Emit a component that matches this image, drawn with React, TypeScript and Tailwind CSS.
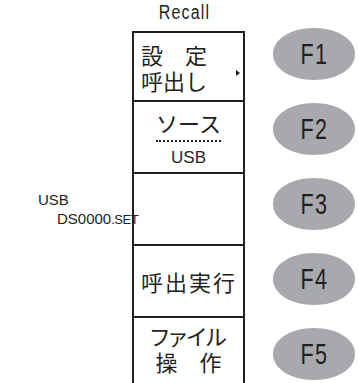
const jp = { fontFamily: '"Noto Sans CJK JP", "Noto Sans", sans-serif' };
const lat = { fontFamily: '"Liberation Sans", Arial, sans-serif' };

const keys = ["F1", "F2", "F3", "F4", "F5"];

function FKey({ label }: { label: string }) {
  return (
    <div className="relative w-[85px] h-[54px] flex items-center justify-center">
      <svg className="absolute inset-0" width="85" height="54" viewBox="0 0 85 54">
        <path
          d="M1 27 C1 12 19 1 42 1 C65 1 83 12 83 27 C83 42 65 53 42 53 C19 53 1 42 1 27 Z"
          fill="#a7a9ac"
        />
      </svg>
      <span
        className="relative text-[30px] leading-none text-[#231f20] scale-x-[0.72] tracking-[2px]"
        style={lat}
      >
        {label}
      </span>
    </div>
  );
}

export default function App() {
  return (
    <div className="w-[359px] h-[383px] bg-white overflow-hidden flex text-[#231f20]">
      {/* file info on the left */}
      <div className="w-[132px] pt-[190px] pl-[38px] text-[15px] leading-[19px]" style={lat}>
        <div>USB</div>
        <div className="pl-[19px] whitespace-nowrap">
          DS0000<span className="text-[13px] tracking-[-0.5px]">.SET</span>
        </div>
      </div>

      {/* menu column */}
      <div className="w-[113px] flex flex-col">
        <div
          className="h-[31px] flex justify-center pt-[1px] pr-[10px] text-[20px] leading-[22px] scale-x-[0.8] tracking-[1.5px]"
          style={lat}
        >
          Recall
        </div>
        <div className="flex-1 border-l-2 border-r-2 border-t-2 border-[#231f20] flex flex-col" style={jp}>
          <div className="relative h-[69px] border-b-2 border-[#231f20] flex flex-col justify-center pl-[7px] text-[22px] leading-[26px]">
            <div>設　定</div>
            <div>呼出し</div>
            <span className="absolute right-[3px] top-[37px] w-0 h-0 border-y-[3px] border-y-transparent border-l-[4px] border-l-[#231f20]" />
          </div>
          <div className="h-[72px] border-b-2 border-[#231f20] flex flex-col items-center pt-[6px]">
            <div className="text-[22px] leading-[28px] pb-[4px] border-b-2 border-dotted border-[#231f20]">ソース</div>
            <div className="text-[17px] leading-[22px] pt-[5px]" style={lat}>USB</div>
          </div>
          <div className="h-[72px] border-b-2 border-[#231f20]" />
          <div className="h-[72px] border-b-2 border-[#231f20] flex items-center pl-[7px] text-[22px] tracking-[2px]">
            呼出実行
          </div>
          <div className="flex-1 flex flex-col items-center pt-[4px] text-[22px] leading-[26px]">
            <div className="[font-feature-settings:'palt']">ファイル</div>
            <div>操　作</div>
          </div>
        </div>
      </div>

      {/* function keys */}
      <div className="flex-1 flex flex-col gap-[21px] pt-[27px] pl-[27px]">
        {keys.map((k) => (
          <FKey key={k} label={k} />
        ))}
      </div>
    </div>
  );
}
